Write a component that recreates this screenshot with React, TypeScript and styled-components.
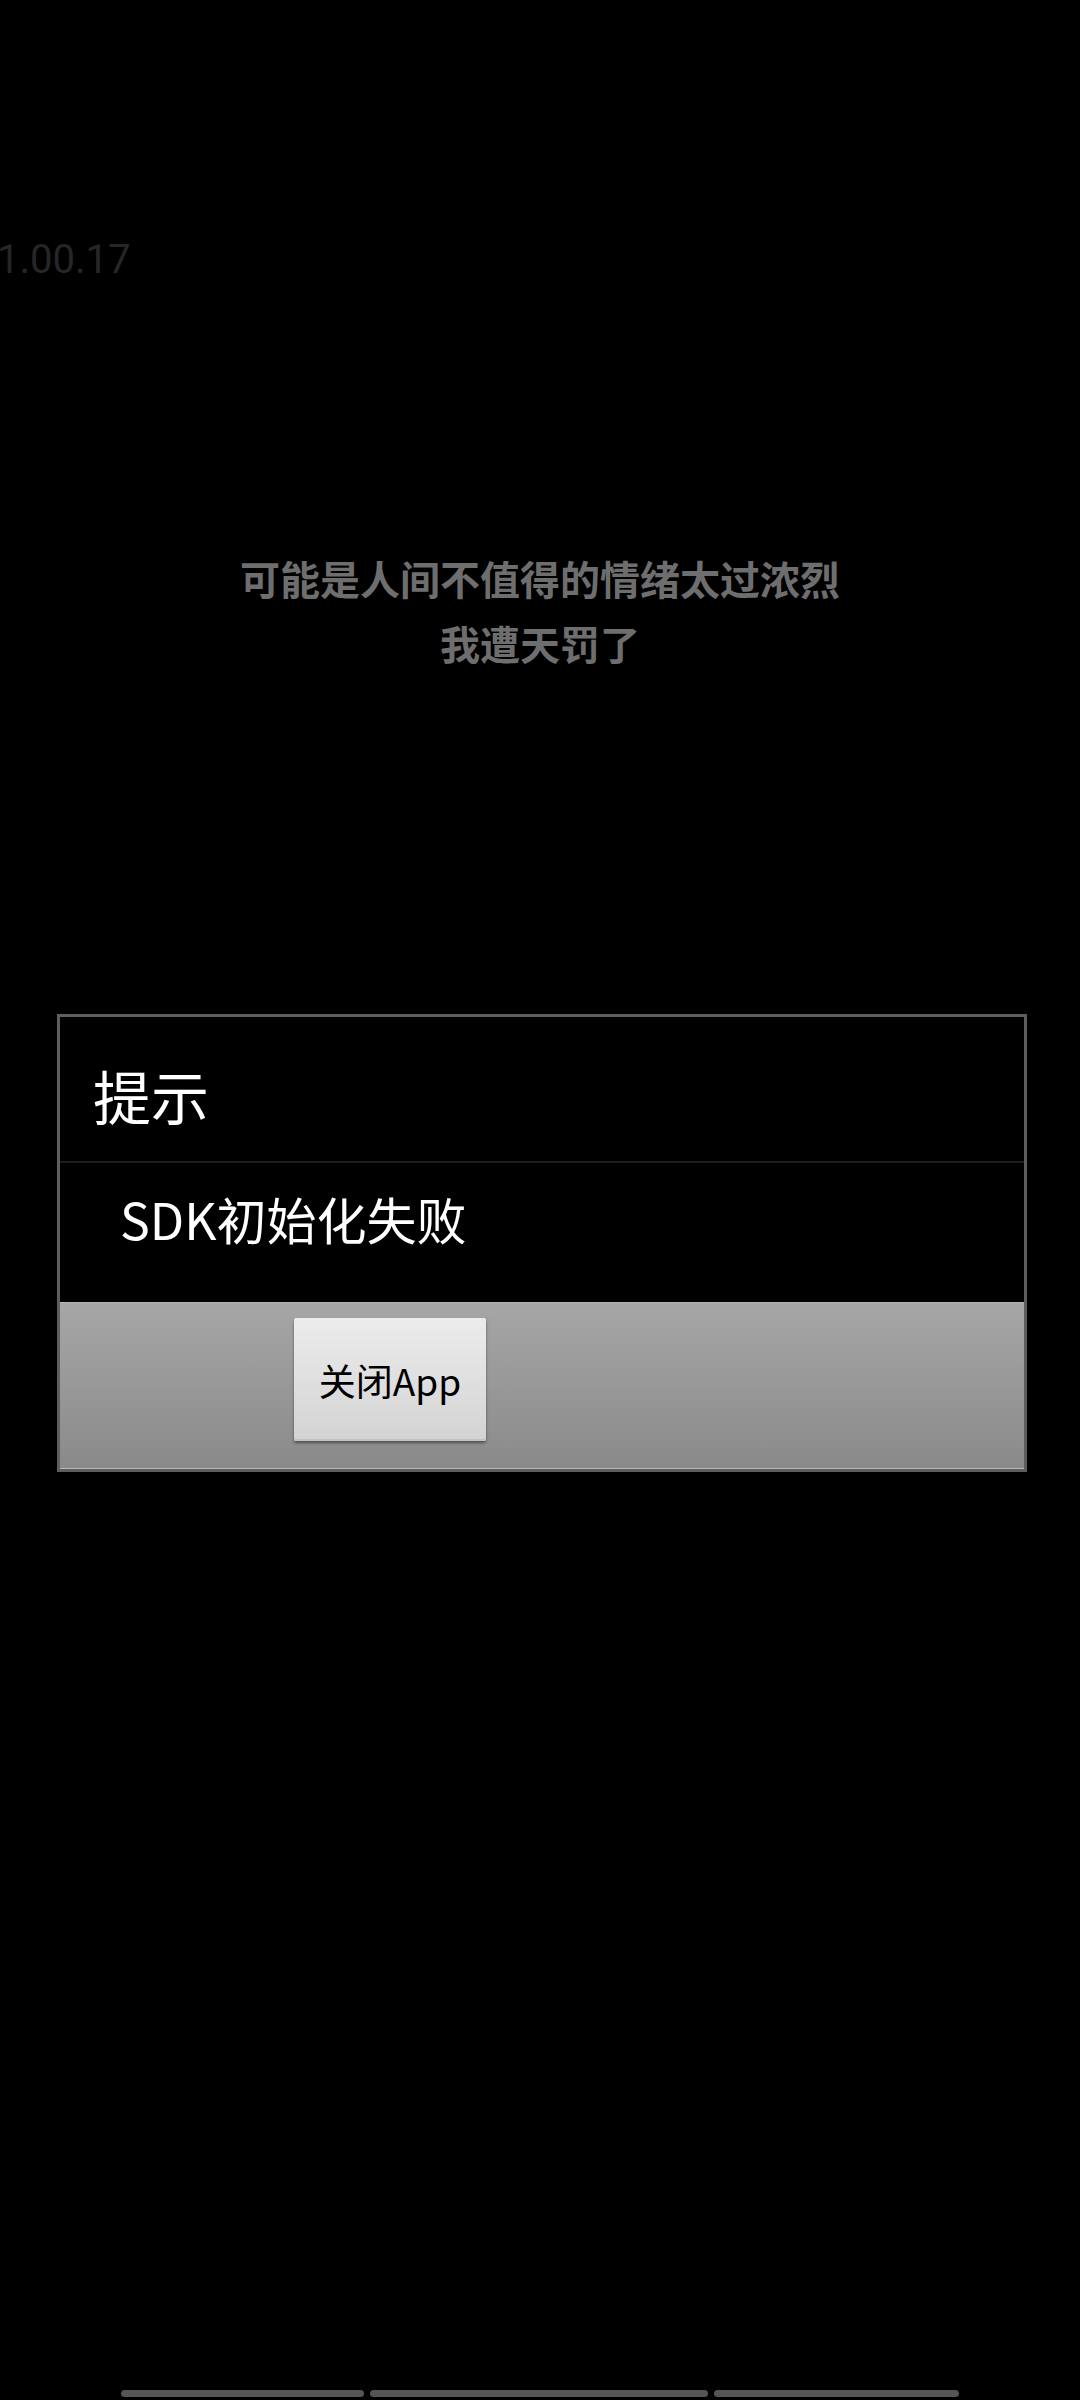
import styled, { createGlobalStyle } from 'styled-components';

const GlobalStyle = createGlobalStyle`
  html, body {
    margin: 0;
    padding: 0;
    background: #000;
  }
`;

const Screen = styled.div`
  width: 1080px;
  min-height: 2400px;
  background: #000;
  display: flex;
  flex-direction: column;
  font-family: Roboto, "Noto Sans CJK SC", sans-serif;
`;

const Version = styled.div`
  margin-top: 239px;
  margin-left: -3px;
  font-family: Roboto, sans-serif;
  font-size: 40px;
  line-height: 42px;
  color: #262626;
`;

const Slogan = styled.div`
  margin-top: 265px;
  text-align: center;
  font-family: "Noto Sans CJK SC", sans-serif;
  font-weight: 700;
  font-size: 40px;
  line-height: 65px;
  color: #6e6e6e;
`;

const Dialog = styled.div`
  margin: 338px 0 0 57px;
  width: 970px;
  border: 3px solid #5e5e5e;
  box-sizing: border-box;
  background: #000;
  display: flex;
  flex-direction: column;
`;

const Title = styled.div`
  padding: 49px 0 37px 33px;
  font-family: "Noto Sans CJK SC", sans-serif;
  font-size: 58px;
  line-height: 58px;
  color: #fff;
  border-bottom: 2px solid #1e1e1e;
`;

const Message = styled.div`
  padding: 30px 0 59px 60px;
  font-family: "Noto Sans CJK SC", sans-serif;
  font-size: 50px;
  line-height: 50px;
  color: #fff;
`;

const ButtonBar = styled.div`
  display: flex;
  padding: 15px 0 27px 234px;
  background: linear-gradient(180deg, #a6a6a6 0%, #8a8a8a 100%);
  border-top: 1px solid #b4b4b4;
  border-bottom: 1px solid #b8b8b8;
`;

const DialogButton = styled.button`
  width: 192px;
  height: 123px;
  padding: 0;
  border: none;
  border-radius: 2px;
  background: linear-gradient(180deg, #ececec 0%, #d3d3d3 100%);
  box-shadow: 0 2px 3px rgba(0, 0, 0, 0.45), inset 0 -2px 0 #c4c4c4;
  font-family: "Noto Sans CJK SC", sans-serif;
  font-size: 37px;
  color: #000;
  cursor: pointer;
`;

const NavBar = styled.div`
  margin-top: auto;
  margin-bottom: 3px;
  margin-left: 121px;
  display: flex;
  gap: 6px;
`;

const NavSegment = styled.div<{ $w: number }>`
  width: ${(p) => p.$w}px;
  height: 7px;
  border-radius: 4px;
  background: #555;
`;

export default function App() {
  return (
    <>
      <GlobalStyle />
      <Screen>
        <Version>1.00.17</Version>
        <Slogan>
          可能是人间不值得的情绪太过浓烈
          <br />
          我遭天罚了
        </Slogan>
        <Dialog>
          <Title>提示</Title>
          <Message>SDK初始化失败</Message>
          <ButtonBar>
            <DialogButton>关闭App</DialogButton>
          </ButtonBar>
        </Dialog>
        <NavBar>
          <NavSegment $w={243} />
          <NavSegment $w={338} />
          <NavSegment $w={245} />
        </NavBar>
      </Screen>
    </>
  );
}
